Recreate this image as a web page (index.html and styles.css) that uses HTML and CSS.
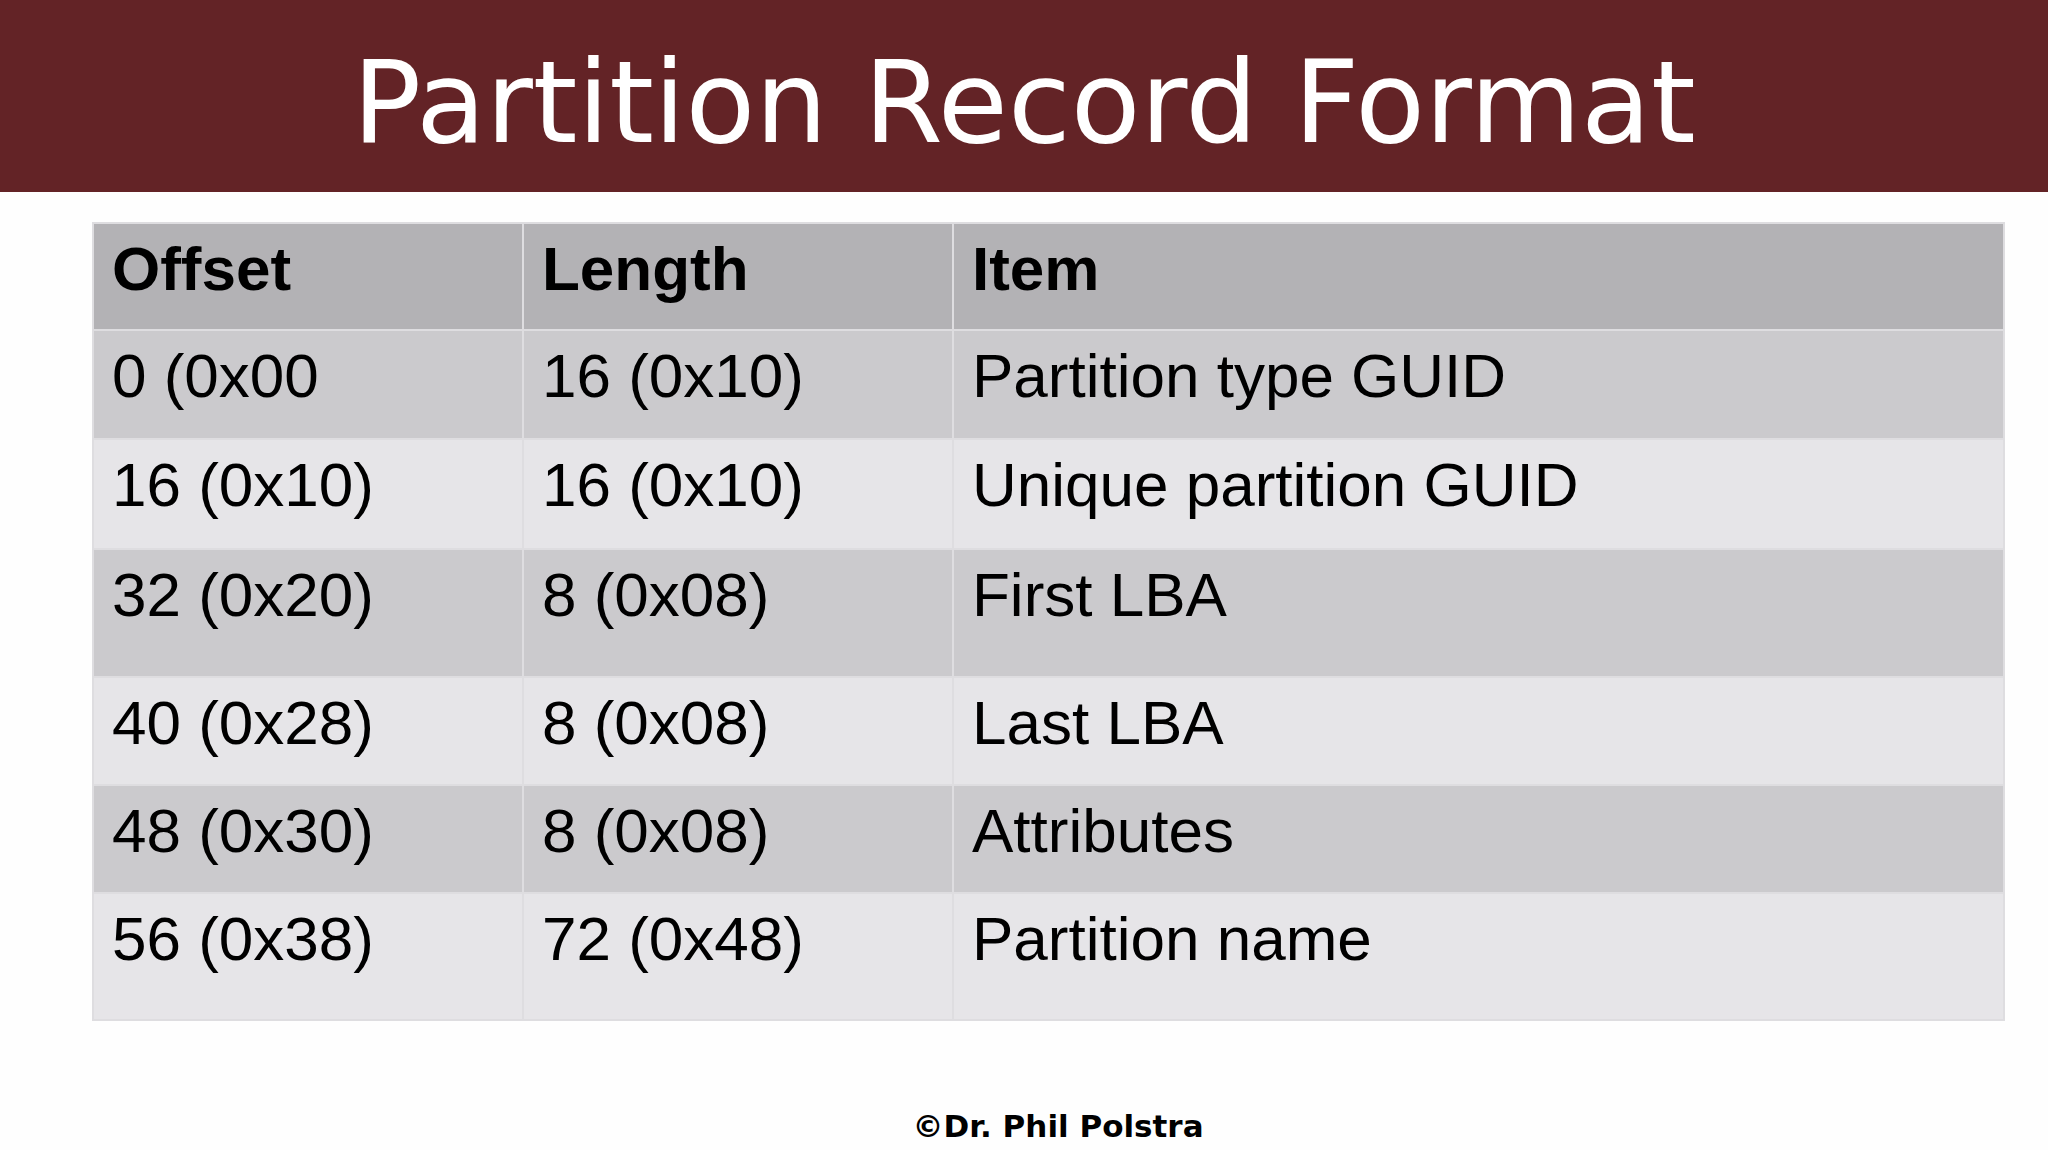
FILE: index.html
```html
<!DOCTYPE html>
<html lang="en">
<head>
  <meta charset="UTF-8">
  <meta name="viewport" content="width=device-width, initial-scale=1.0">
  <title> Partition Record Format </title>
  <link rel="stylesheet" href="styles.css">
</head>
<body>
  <div class="slide">
    <div class="title-bar">
      <h1> Partition Record Format </h1>
    </div>

    <div class="table-box">
      <table class="record">
        <thead>
          <tr>
            <th>Offset</th>
            <th>Length</th>
            <th>Item</th>
          </tr>
        </thead>
        <tbody>
          <tr class="r1">
            <td>0 (0x00</td>
            <td>16 (0x10)</td>
            <td>Partition type GUID</td>
          </tr>
          <tr class="r2">
            <td>16 (0x10)</td>
            <td>16 (0x10)</td>
            <td>Unique partition GUID</td>
          </tr>
          <tr class="r3">
            <td>32 (0x20)</td>
            <td>8 (0x08)</td>
            <td>First LBA</td>
          </tr>
          <tr class="r4">
            <td>40 (0x28)</td>
            <td>8 (0x08)</td>
            <td>Last LBA</td>
          </tr>
          <tr class="r5">
            <td>48 (0x30)</td>
            <td>8 (0x08)</td>
            <td>Attributes</td>
          </tr>
          <tr class="r6">
            <td>56 (0x38)</td>
            <td>72 (0x48)</td>
            <td>Partition name</td>
          </tr>
        </tbody>
      </table>
    </div>

    <p class="footer">&copy;Dr. Phil Polstra</p>
  </div>
</body>
</html>
```

FILE: styles.css
```css
* {
  margin: 0;
  padding: 0;
}

body {
  width: 2048px;
  height: 1150px;
  overflow: hidden;
  background-color: #fefefe;
}

.slide {
  display: flex;
  flex-direction: column;
  height: 1150px;
}

.title-bar {
  height: 192px;
  padding-top: 14px;
  box-sizing: border-box;
  background-color: #632326;
}

.title-bar>h1 {
  color: #fff;
  font-family: "DejaVu Sans", sans-serif;
  font-size: 114px;
  font-weight: 400;
  line-height: 178px;
  text-align: center;
}

.table-box {
  padding: 30px 43px 0 92px;
}

.record {
  width: 1913px;
  border-collapse: collapse;
  font-family: "Liberation Sans", Arial, sans-serif;
  font-size: 62px;
  color: #000;
}

.record th,
.record td {
  padding: 9px 0 0 18px;
  line-height: 71px;
  text-align: left;
  vertical-align: top;
  border: 2px solid #dedde0;
  box-sizing: border-box;
}

.record th:nth-child(1),
.record td:nth-child(1) {
  width: 430px;
}

.record th:nth-child(2),
.record td:nth-child(2) {
  width: 430px;
}

.record th {
  font-weight: 700;
  background-color: #b3b2b5;
}

.record thead tr { height: 107px; }
.r1 { height: 109px; }
.r2 { height: 110px; }
.r3 { height: 128px; }
.r4 { height: 108px; }
.r5 { height: 108px; }
.r6 { height: 127px; }

.r1>td,
.r3>td,
.r5>td {
  background-color: #cbcacd;
}

.r2>td,
.r4>td,
.r6>td {
  background-color: #e6e5e8;
}

.footer {
  margin-top: auto;
  padding: 0 0 4px 68px;
  font-family: "DejaVu Sans", sans-serif;
  font-size: 31px;
  font-weight: 700;
  line-height: 40px;
  text-align: center;
  color: #000;
}
```
